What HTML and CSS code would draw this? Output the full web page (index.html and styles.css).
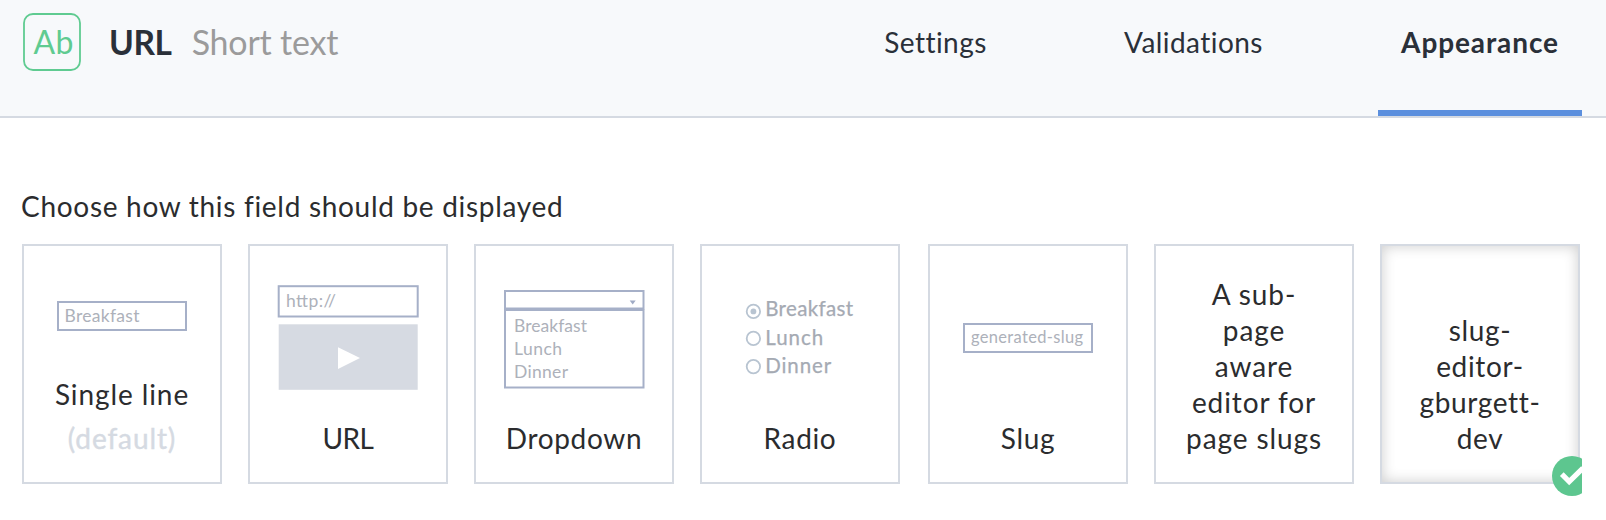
FILE: index.html
```
<!DOCTYPE html>
<html lang="en">
<head>
<meta charset="utf-8">
<title>Field appearance</title>
<link rel="stylesheet" href="styles.css">
</head>
<body>
<header class="header">
  <svg class="field-icon" width="58" height="58" viewBox="0 0 58 58"><rect class="field-frame" x="1" y="1" width="56" height="56" rx="9"/><text class="field-letters" x="10.5" y="40.5" textLength="40">Ab</text></svg>
  <h1 class="title">URL</h1>
  <span class="subtitle">Short text</span>
  <nav class="tabs">
    <a class="tab tab-settings">Settings</a>
    <a class="tab tab-validations">Validations</a>
    <a class="tab tab-active">Appearance</a>
  </nav>
</header>
<main class="content">
  <p class="prompt">Choose how this field should be displayed</p>
  <div class="cards">
    <div class="card">
      <svg class="preview" width="196" height="120">
        <rect class="box" x="34" y="56" width="128" height="28"/>
        <text class="sample" x="40.5" y="75.7" textLength="75">Breakfast</text>
      </svg>
      <span class="label label-line">Single line<span class="default">(default)</span></span>
    </div>
    <div class="card">
      <svg class="preview" width="196" height="150">
        <rect class="box" x="28.7" y="40.2" width="139" height="30.3"/>
        <text class="sample" x="36" y="60.7" textLength="50">http://</text>
        <rect class="video" x="28.7" y="78.3" width="139" height="65.5"/>
        <path class="play" d="M88 101.3 110 112 88 123z"/>
      </svg>
      <span class="label label-url">URL</span>
    </div>
    <div class="card">
      <svg class="preview" width="196" height="150">
        <rect class="box" x="29" y="45" width="138.5" height="17.5"/>
        <rect class="box" x="29" y="64" width="138.5" height="77.5"/>
        <path class="caret" d="M153.7 54.5h6l-3 4z"/>
        <text class="sample" x="38" y="85.7" textLength="73">Breakfast</text>
        <text class="sample" x="38" y="108.7" textLength="48">Lunch</text>
        <text class="sample" x="38" y="131.7" textLength="54">Dinner</text>
      </svg>
      <span class="label">Dropdown</span>
    </div>
    <div class="card">
      <svg class="preview" width="196" height="150">
        <circle class="radio" cx="51.4" cy="65.4" r="6.7"/>
        <circle class="dot" cx="51.4" cy="65.4" r="2.9"/>
        <circle class="radio" cx="51.4" cy="92.4" r="6.7"/>
        <circle class="radio" cx="51.4" cy="120.6" r="6.7"/>
        <text class="option" x="63.2" y="70.2" textLength="88">Breakfast</text>
        <text class="option" x="63.2" y="99" textLength="58">Lunch</text>
        <text class="option" x="63.2" y="127" textLength="66">Dinner</text>
      </svg>
      <span class="label">Radio</span>
    </div>
    <div class="card card-slug">
      <svg class="preview" width="196" height="150">
        <rect class="box" x="34" y="78" width="128" height="28"/>
        <text class="sample sample-slug" x="41" y="96.7" textLength="112">generated-slug</text>
      </svg>
      <span class="label">Slug</span>
    </div>
    <div class="card"><span class="label label-wide">A sub-<br>page<br>aware<br>editor for<br>page slugs</span></div>
    <div class="card card-selected">
      <span class="label">slug-<br>editor-<br>gburgett-<br>dev</span>
      <svg class="badge" width="30" height="40"><circle class="badge-disc" cx="20" cy="20" r="20"/><path class="badge-tick" d="M9.8 18.2 17.2 25.6 31 12"/></svg>
    </div>
  </div>
</main>
</body>
</html>
```
FILE: styles.css
```
body {
  min-height: 520px;
  margin: 0;
  background: #fff;
  color: #2b2c2e;
  font: 28px/36px Lato, "Open Sans", sans-serif;
  letter-spacing: .65px;
}

.header {
  display: flex;
  height: 116px;
  padding: 0 24px 0 23px;
  background: #f7f9fb;
  border-bottom: 2px solid #d5dae2;
  color: #2a3039;
}
.field-icon { flex: none; margin-top: 13px; }
.field-frame { fill: none; stroke: #5fcb91; stroke-width: 1.8; }
.field-letters { fill: #5fcb91; font-size: 32px; letter-spacing: 0; }
.title {
  margin: 24px 0 0 28px;
  font-size: 33.5px;
  font-weight: 700;
  line-height: 36px;
  letter-spacing: -.4px;
}
.subtitle {
  margin: 24px 0 0 20px;
  color: #9b9b9b;
  font-size: 34px;
  letter-spacing: -.2px;
}
.tabs { display: flex; gap: 91px; margin-left: auto; }
.tab {
  box-sizing: border-box;
  height: 116px;
  padding-top: 24px;
  text-align: center;
  letter-spacing: .45px;
}
.tab-settings { width: 147px; }
.tab-validations { width: 187px; }
.tab-active {
  width: 204px;
  border-bottom: 6px solid #5b8fde;
  font-weight: 700;
  letter-spacing: .9px;
}

.content { padding: 70px 26px 0 22px; }
.prompt { margin: 0 0 20px -1px; letter-spacing: .7px; }
.cards { display: flex; gap: 26px; }
.card {
  box-sizing: border-box;
  position: relative;
  display: flex;
  flex: none;
  flex-direction: column;
  width: 200px;
  height: 240px;
  padding-bottom: 26px;
  border: 2px solid #d5dae2;
  text-align: center;
}
.card-slug { margin-left: 2px; }
.card-selected { box-shadow: inset 0 0 14px rgba(0, 0, 0, .2); }
.label { margin-top: auto; }
.label-line { letter-spacing: .9px; }
.label-url { letter-spacing: -.5px; }
.label-wide { letter-spacing: .9px; }
.default {
  display: block;
  margin-top: 8px;
  color: #d5dae2;
  -webkit-text-stroke: .4px #d5dae2;
}

.preview { display: block; letter-spacing: 0; }
.box { fill: none; stroke: #a6b0c8; stroke-width: 2; }
.sample { fill: #adb1ba; font-size: 17.5px; }
.sample-slug { font-size: 16.5px; }
.video { fill: #d6dae2; }
.play { fill: #fff; }
.caret { fill: #a0abc5; }
.radio { fill: none; stroke: #b8c4d1; stroke-width: 1.8; }
.dot { fill: #b8c4d1; }
.option { fill: #a5aab3; stroke: #a5aab3; stroke-width: .25px; font-size: 20.5px; }

.badge { position: absolute; right: -4px; bottom: -14px; }
.badge-disc { fill: #5dc68f; }
.badge-tick { fill: none; stroke: #fff; stroke-width: 5.2; }
```
